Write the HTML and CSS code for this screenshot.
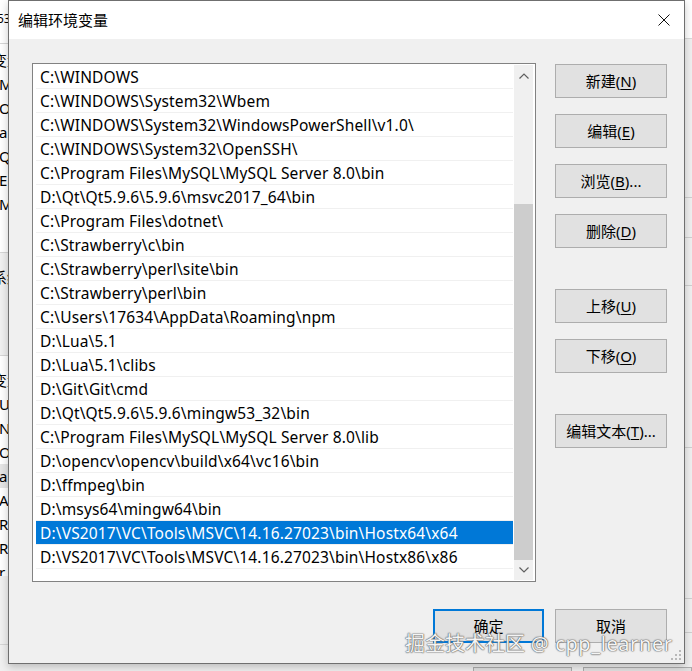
FILE: index.html
```html
<!DOCTYPE html>
<html lang="zh-CN">
<head>
<meta charset="utf-8">
<title>编辑环境变量</title>
<link rel="stylesheet" href="styles.css">
</head>
<body>
<div class="screen">
  <div class="bgwin">
    <div class="bl">
      <div class="bl-head"><span class="cut-l">53</span></div>
      <div class="bl-list">
        <div class="bl-row"><span class="cut-c">变量</span></div>
        <div class="bl-row"><span class="cut-s">MY</span></div>
        <div class="bl-row"><span class="cut-s">Or</span></div>
        <div class="bl-row"><span class="cut-s">a</span></div>
        <div class="bl-row"><span class="cut-s">Qt</span></div>
        <div class="bl-row"><span class="cut-s">E</span></div>
        <div class="bl-row"><span class="cut-s">M</span></div>
      </div>
      <div class="bl-grey"><div class="bl-row"><span class="cut-c">系统</span></div></div>
      <div class="bl-list2">
        <div class="bl-row"><span class="cut-c">变量</span></div>
        <div class="bl-row"><span class="cut-s">U</span></div>
        <div class="bl-row"><span class="cut-s">NU</span></div>
        <div class="bl-row"><span class="cut-s">OS</span></div>
        <div class="bl-row bl-sel"><span class="cut-s">a</span></div>
        <div class="bl-row"><span class="cut-s">A</span></div>
        <div class="bl-row"><span class="cut-s">R</span></div>
        <div class="bl-row"><span class="cut-s">R</span></div>
        <div class="bl-row"><span class="cut-s">r</span></div>
      </div>
      <div class="bl-foot"></div>
    </div>
    <div class="br">
      <div class="br-top"></div>
      <div class="br-seg s1"></div>
      <div class="br-seg s2"></div>
      <div class="br-seg s3"></div>
      <div class="br-seg s4"></div>
      <div class="br-seg s5"></div>
      <div class="br-seg s6"></div>
    </div>
    <div class="bb">
      <div class="bb-btn b1"></div>
      <div class="bb-btn b2"></div>
    </div>
  </div>

  <div class="dialog">
    <div class="titlebar">
      <span class="title">编辑环境变量</span>
      <svg class="close" width="12" height="12" viewBox="0 0 12 12"><path d="M0.5 0.5 L11.5 11.5 M11.5 0.5 L0.5 11.5" stroke="#111" stroke-width="1" fill="none"/></svg>
    </div>
    <div class="body">
      <div class="main">
        <div class="list">
          <div class="rows">
            <div class="row">C:\WINDOWS</div>
            <div class="row">C:\WINDOWS\System32\Wbem</div>
            <div class="row">C:\WINDOWS\System32\WindowsPowerShell\v1.0\</div>
            <div class="row">C:\WINDOWS\System32\OpenSSH\</div>
            <div class="row">C:\Program Files\MySQL\MySQL Server 8.0\bin</div>
            <div class="row">D:\Qt\Qt5.9.6\5.9.6\msvc2017_64\bin</div>
            <div class="row">C:\Program Files\dotnet\</div>
            <div class="row">C:\Strawberry\c\bin</div>
            <div class="row">C:\Strawberry\perl\site\bin</div>
            <div class="row">C:\Strawberry\perl\bin</div>
            <div class="row">C:\Users\17634\AppData\Roaming\npm</div>
            <div class="row">D:\Lua\5.1</div>
            <div class="row">D:\Lua\5.1\clibs</div>
            <div class="row">D:\Git\Git\cmd</div>
            <div class="row">D:\Qt\Qt5.9.6\5.9.6\mingw53_32\bin</div>
            <div class="row">C:\Program Files\MySQL\MySQL Server 8.0\lib</div>
            <div class="row">D:\opencv\opencv\build\x64\vc16\bin</div>
            <div class="row">D:\ffmpeg\bin</div>
            <div class="row">D:\msys64\mingw64\bin</div>
            <div class="row selected">D:\VS2017\VC\Tools\MSVC\14.16.27023\bin\Hostx64\x64</div>
            <div class="row">D:\VS2017\VC\Tools\MSVC\14.16.27023\bin\Hostx86\x86</div>
          </div>
          <div class="scrollbar">
            <div class="sb-arrow up"><svg width="10" height="6" viewBox="0 0 10 6"><polyline points="0.5,5.5 5,1 9.5,5.5" fill="none" stroke="#606060" stroke-width="1.2"/></svg></div>
            <div class="sb-track"><div class="sb-thumb"></div></div>
            <div class="sb-arrow down"><svg width="10" height="6" viewBox="0 0 10 6"><polyline points="0.5,0.5 5,5 9.5,0.5" fill="none" stroke="#606060" stroke-width="1.2"/></svg></div>
          </div>
        </div>
        <div class="side">
          <button class="btn">新建(<u>N</u>)</button>
          <button class="btn">编辑(<u>E</u>)</button>
          <button class="btn">浏览(<u>B</u>)...</button>
          <button class="btn">删除(<u>D</u>)</button>
          <button class="btn sep">上移(<u>U</u>)</button>
          <button class="btn">下移(<u>O</u>)</button>
          <button class="btn sep">编辑文本(<u>T</u>)...</button>
        </div>
      </div>
      <div class="footer">
        <button class="btn ok">确定</button>
        <button class="btn">取消</button>
      </div>
    </div>
    <svg class="grip" width="12" height="12" viewBox="0 0 12 12">
      <g fill="#b8b8b8">
        <rect x="9" y="1" width="2" height="2"/>
        <rect x="5" y="5" width="2" height="2"/><rect x="9" y="5" width="2" height="2"/>
        <rect x="1" y="9" width="2" height="2"/><rect x="5" y="9" width="2" height="2"/><rect x="9" y="9" width="2" height="2"/>
      </g>
    </svg>
  </div>

  <div class="watermark">掘金技术社区<span class="wm-latin"> @ cpp_learner</span></div>
</div>
</body>
</html>
```

FILE: styles.css
```css
html, body {
  margin: 0;
  padding: 0;
}
body {
  width: 692px;
  height: 671px;
  overflow: hidden;
  font-family: "Noto Sans", "Noto Sans CJK SC", sans-serif;
  color: #000;
}
.screen {
  position: relative;
  width: 692px;
  height: 671px;
  overflow: hidden;
  background: #f0f0f0;
}

/* ---------- background window (behind the dialog) ---------- */
.bgwin {
  position: absolute;
  inset: 0;
}
.bl {
  position: absolute;
  left: 0;
  top: 0;
  width: 8px;
  height: 671px;
  overflow: hidden;
  display: flex;
  flex-direction: column;
  font-size: 15px;
  white-space: nowrap;
}
.bl-head {
  height: 43px;
  line-height: 38px;
  background: #fff;
  border-bottom: 1px solid #d6d6d6;
  font-size: 12px;
}
.bl-list {
  height: 204px;
  padding-top: 4px;
  background: #fff;
  border-bottom: 1px solid #d6d6d6;
}
.bl-row {
  height: 24px;
  line-height: 24px;
}
.bl-grey {
  height: 90px;
  padding-top: 12px;
  background: #f0f0f0;
  border-bottom: 1px solid #d6d6d6;
}
.bl-list2 {
  height: 208px;
  padding-top: 12px;
  background: #fff;
  overflow: hidden;
}
.bl-sel {
  background: #e5e5e5;
}
.bl-foot {
  height: 68px;
  background: #f0f0f0;
  border-bottom: 1px solid #d6d6d6;
}
.cut-l { margin-left: -3px; }
.cut-c { margin-left: -8px; font-family: "Noto Sans CJK SC", sans-serif; }
.cut-s { margin-left: -1px; }

.br {
  position: absolute;
  left: 685px;
  top: 0;
  width: 7px;
  height: 671px;
  display: flex;
  flex-direction: column;
}
.br-top {
  height: 38px;
  background: #fff;
  border-bottom: 1px solid #dadada;
}
.br-seg {
  border-bottom: 1px solid #d0d0d0;
}
.s1 { height: 158px; }
.s2 { height: 39px; }
.s3 { height: 47px; }
.s4 { height: 161px; }
.s5 { height: 150px; }
.s6 { height: 33px; }

.bb {
  position: absolute;
  left: 0;
  top: 667px;
  width: 692px;
  height: 4px;
  display: flex;
  padding-left: 473px;
  gap: 11px;
  box-sizing: border-box;
}
.bb-btn {
  height: 10px;
  border: 1px solid #adadad;
  background: #e1e1e1;
}
.b1 { width: 108px; }
.b2 { width: 120px; }

/* ---------- dialog ---------- */
.dialog {
  position: absolute;
  left: 8px;
  top: 0;
  width: 675px;
  height: 662px;
  border: 1px solid #6f6f6f;
  background: #f0f0f0;
  display: flex;
  flex-direction: column;
  box-shadow: 0 3px 8px rgba(0, 0, 0, 0.22);
}
.titlebar {
  height: 38px;
  flex: none;
  background: #fff;
  display: flex;
  align-items: center;
  justify-content: space-between;
  padding: 0 14px 0 9px;
}
.title {
  font-family: "Noto Sans CJK SC", sans-serif;
  font-size: 15px;
  line-height: 20px;
}
.close {
  display: block;
}
.body {
  flex: 1;
  display: flex;
  flex-direction: column;
  padding: 24px 17px 20px 23px;
}
.main {
  display: flex;
  gap: 19px;
}
.list {
  box-sizing: border-box;
  width: 504px;
  height: 519px;
  border: 1px solid #828282;
  background: #fff;
  display: flex;
  padding: 1px 2px 1px 3px;
  gap: 1px;
}
.rows {
  width: 477px;
  display: flex;
  flex-direction: column;
}
.row {
  height: 22px;
  padding-top: 1px;
  line-height: 23px;
  border-bottom: 1px solid #f0f0f0;
  padding-left: 4px;
  font-size: 15.5px;
  letter-spacing: 0.15px;
  white-space: nowrap;
  overflow: hidden;
}
.row.selected {
  background: #0078d7;
  color: #fff;
}
.scrollbar {
  width: 19px;
  background: #f0f0f0;
  display: flex;
  flex-direction: column;
}
.sb-arrow {
  display: flex;
  align-items: center;
  justify-content: center;
}
.sb-arrow svg { display: block; }
.sb-arrow.up { height: 22px; }
.sb-arrow.down { height: 20px; }
.sb-track {
  flex: 1;
}
.sb-thumb {
  margin-top: 117px;
  height: 356px;
  background: #cdcdcd;
}

.side {
  display: flex;
  flex-direction: column;
  gap: 16px;
  padding-top: 1px;
}
.btn {
  box-sizing: border-box;
  width: 112px;
  height: 34px;
  padding: 0;
  margin: 0;
  border: 1px solid #adadad;
  background: #e1e1e1;
  font-family: "Noto Sans", "Noto Sans CJK SC", sans-serif;
  font-size: 15px;
  color: #000;
  display: flex;
  align-items: center;
  justify-content: center;
  line-height: 20px;
}
.btn u {
  text-underline-offset: 2px;
}
.btn.sep {
  margin-top: 25px;
}
.footer {
  display: flex;
  justify-content: flex-end;
  gap: 11px;
  margin-top: 27px;
}
.btn.ok {
  width: 111px;
  border: 2px solid #0078d7;
}
.grip {
  position: absolute;
  right: 2px;
  bottom: 2px;
}

/* ---------- watermark overlay ---------- */
.watermark {
  position: absolute;
  left: 405px;
  top: 631px;
  font-family: "Noto Sans CJK SC", "Noto Sans", sans-serif;
  font-size: 20px;
  line-height: 24px;
  color: #f4f4f4;
  white-space: nowrap;
  text-shadow: 0 0 1px #555, 0 0 1px #555, 0 0 2px #888;
}
.wm-latin {
  font-family: "Noto Sans", sans-serif;
  letter-spacing: 0.6px;
}
```
